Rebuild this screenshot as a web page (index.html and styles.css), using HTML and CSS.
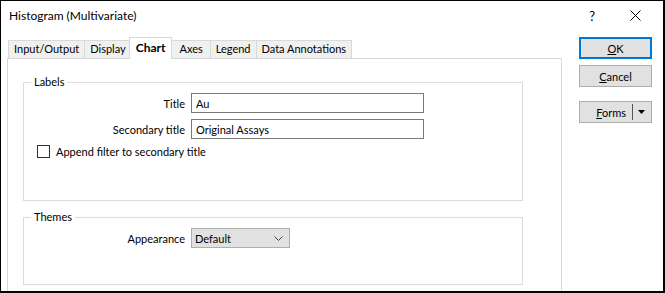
FILE: index.html
```html
<!DOCTYPE html>
<html lang="en">
<head>
  <meta charset="UTF-8" />
  <title>Histogram (Multivariate)</title>
  <link rel="stylesheet" href="styles.css">
</head>
<body>
  <div class="window">
    <div class="titlebar">
      <span class="caption">Histogram (Multivariate)</span>
      <span class="help">?</span>
      <svg class="close" width="11" height="11" viewBox="0 0 11 11">
        <path d="M0.5 0.5L10.5 10.5M10.5 0.5L0.5 10.5" stroke="#000" stroke-width="1" fill="none"/>
      </svg>
    </div>

    <div class="body">
      <div class="main">
        <div class="tabs">
          <div class="tab">Input/Output</div>
          <div class="tab">Display</div>
          <div class="tab active">Chart</div>
          <div class="tab wide">Axes</div>
          <div class="tab">Legend</div>
          <div class="tab">Data Annotations</div>
        </div>

        <div class="panel">
          <fieldset class="group labels">
            <legend>Labels</legend>
            <div class="form-grid">
              <label>Title</label>
              <input class="text" type="text" value="Au" />
              <label>Secondary title</label>
              <input class="text" type="text" value="Original Assays" />
            </div>
            <label class="check"><span class="box"></span>Append filter to secondary title</label>
          </fieldset>

          <fieldset class="group themes">
            <legend>Themes</legend>
            <div class="form-grid">
              <label>Appearance</label>
              <div class="combo">
                <span>Default</span>
                <svg width="9" height="5" viewBox="0 0 9 5"><path d="M0.5 0.5L4.5 4.5L8.5 0.5" stroke="#444" fill="none"/></svg>
              </div>
            </div>
          </fieldset>
        </div>
      </div>

      <div class="side">
        <button class="btn default"><u>O</u>K</button>
        <button class="btn"><u>C</u>ancel</button>
        <button class="btn split">
          <span class="split-label"><u>F</u>orms</span>
          <span class="split-sep"></span>
          <svg width="7" height="4" viewBox="0 0 7 4"><path d="M0 0H7L3.5 4Z" fill="#000"/></svg>
        </button>
      </div>
    </div>
  </div>
</body>
</html>
```

FILE: styles.css
```css
html, body {
  margin: 0;
  padding: 0;
  background-color: #FFFFFF;
  color: #000000;
  font-family: 'Lato', sans-serif;
  font-size: 11px;
}
.window {
  box-sizing: border-box;
  width: 665px;
  height: 293px;
  border: 1px solid #000000;
  border-width: 1px 2px 2px 1px;
  overflow: hidden;
}
.titlebar {
  display: flex;
  align-items: center;
  height: 29px;
  padding-left: 8px;
  font-size: 12px;
}
.caption {
  flex: 1;
}
.help {
  margin-right: 35px;
  font-size: 13px;
}
.close {
  margin-right: 22px;
}
.body {
  display: flex;
}
.main {
  margin-left: 6px;
  width: 555px;
}
.tabs {
  display: flex;
  align-items: flex-end;
  height: 21px;
  margin-top: 7px;
  padding-left: 1px;
}
.tab {
  box-sizing: border-box;
  height: 18px;
  line-height: 16px;
  padding: 0 5px;
  background-color: #F0F0F0;
  border: 1px solid #D9D9D9;
  border-bottom: none;
  margin-right: -1px;
}
.tab.wide {
  padding: 0 7px;
}
.tab.active {
  position: relative;
  z-index: 1;
  height: 22px;
  margin: 0 -1px -1px -2px;
  padding: 0 6px;
  background-color: #FFFFFF;
  font-weight: bold;
  font-size: 12px;
  line-height: 19px;
}
.panel {
  box-sizing: border-box;
  height: 260px;
  border: 1px solid #D9D9D9;
  padding: 15px 0 0 15px;
}
.group {
  box-sizing: border-box;
  width: 500px;
  margin: 0;
  padding: 0;
  border: 1px solid #DCDCDC;
}
.group legend {
  margin-left: 7px;
  padding: 0 3px;
  line-height: 16px;
}
.labels {
  height: 127px;
}
.themes {
  height: 76px;
  margin-top: 8px;
}
.form-grid {
  display: grid;
  grid-template-columns: 161px 233px;
  column-gap: 6px;
  row-gap: 6px;
  margin-top: 3px;
  align-items: center;
}
.form-grid label {
  text-align: right;
}
.text {
  box-sizing: border-box;
  height: 20px;
  margin: 0;
  padding: 0 4px;
  border: 1px solid #7A7A7A;
  font-family: inherit;
  font-size: 11px;
  color: #000000;
}
.check {
  display: flex;
  align-items: center;
  margin: 6px 0 0 13px;
}
.box {
  box-sizing: border-box;
  width: 13px;
  height: 13px;
  border: 1px solid #333333;
  margin-right: 6px;
}
.combo {
  box-sizing: border-box;
  display: flex;
  align-items: center;
  justify-content: space-between;
  width: 99px;
  height: 20px;
  padding: 0 6px 0 3px;
  background-color: #E1E1E1;
  border: 1px solid #ADADAD;
}
.side {
  display: flex;
  flex-direction: column;
  margin: 7px 0 0 17px;
}
.btn {
  box-sizing: border-box;
  width: 73px;
  height: 22px;
  margin: 0 0 6px;
  padding: 0;
  background-color: #E1E1E1;
  border: 1px solid #ADADAD;
  font-family: inherit;
  font-size: 11px;
  color: #000000;
}
.btn.default {
  border: 2px solid #0078D7;
}
.split {
  display: flex;
  align-items: center;
  margin-top: 8px;
  padding-right: 6px;
}
.split-label {
  flex: 1;
  text-align: right;
  padding-right: 6px;
}
.split-sep {
  width: 1px;
  height: 16px;
  background-color: #555555;
  margin-right: 5px;
}
```
